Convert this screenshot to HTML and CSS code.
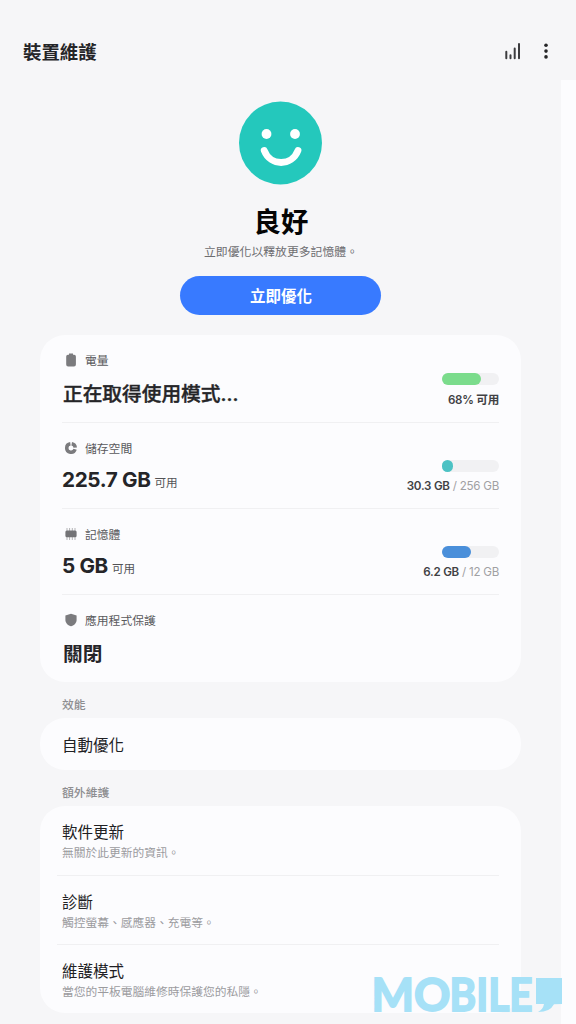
FILE: index.html
```html
<!DOCTYPE html>
<html lang="zh-Hant">
<head>
<meta charset="utf-8">
<title>裝置維護</title>
<link rel="stylesheet" href="styles.css">
</head>
<body>
<div class="edge"></div>
<header class="bar">
  <h1 class="title">裝置維護</h1>
  <div class="actions">
    <svg class="signal" width="18" height="20" viewBox="0 0 18 20" fill="none" stroke="#3c3c3f" stroke-width="2" stroke-linecap="round"><path d="M2.300 9.700V16.200M6.500 13.200V16.200M10.700 6.500V16.200M15 1.900V16.200"/></svg>
    <svg class="more" width="6" height="20" viewBox="0 0 6 20" fill="#252527"><circle cx="3" cy="3.3" r="1.8"/><circle cx="3" cy="9.1" r="1.8"/><circle cx="3" cy="14.9" r="1.8"/></svg>
  </div>
</header>
<main>
  <section class="hero">
    <svg class="face" width="84" height="84" viewBox="0 0 84 84"><circle cx="41.500" cy="42" r="41.5" fill="#24c8bc"/><circle cx="27.500" cy="33" r="4.9" fill="#fff"/><circle cx="56" cy="33" r="4.900" fill="#fff"/><path d="M25.200 49.500C31.500 65.500 52.700 65.500 59 49.500" fill="none" stroke="#fff" stroke-width="6.800" stroke-linecap="round"/></svg>
    <h2 class="status">良好</h2>
    <p class="hint">立即優化以釋放更多記憶體。</p>
    <button class="optimize">立即優化</button>
  </section>
  <section class="card stats">
    <div class="stat battery">
      <div class="info">
        <div class="label"><svg width="14" height="14" viewBox="0 0 14 14" fill="#7b7b7e"><path d="M5 .6h4v1.2h1.2a1.7 1.7 0 0 1 1.7 1.7v8.1a1.900 1.900 0 0 1-1.900 1.900H4.100a1.900 1.900 0 0 1-1.900-1.900V3.500a1.700 1.700 0 0 1 1.700-1.700H5z"/></svg><span>電量</span></div>
        <div class="value cjk">正在取得使用模式...</div>
      </div>
      <div class="usage"><div class="track"><i class="fill green" style="width:68%"></i></div><div class="amount"><b>68% 可用</b></div></div>
    </div>
    <div class="stat storage">
      <div class="info">
        <div class="label"><svg width="14" height="14" viewBox="0 0 14 14" fill="none" stroke="#7b7b7e" stroke-width="3.500"><path d="M6.400 2.700A4.300 4.300 0 1 0 11.100 8.300M7.700 2.750A4.300 4.300 0 0 1 11.250 6.700"/></svg><span>儲存空間</span></div>
        <div class="value">225.7 GB<small>可用</small></div>
      </div>
      <div class="usage"><div class="track"><i class="fill teal" style="width:20%"></i></div><div class="amount"><b>30.3 GB</b> / 256 GB</div></div>
    </div>
    <div class="stat memory">
      <div class="info">
        <div class="label"><svg width="14" height="14" viewBox="0 0 14 14"><path d="M3 1v12M5.600 1v12M8.300 1v12M11 1v12" stroke="#b3b3b6" stroke-width="1"/><rect x="1.400" y="3.500" width="11.200" height="6.800" rx="1.500" fill="#737376"/></svg><span>記憶體</span></div>
        <div class="value">5 GB<small>可用</small></div>
      </div>
      <div class="usage"><div class="track"><i class="fill blue" style="width:51%"></i></div><div class="amount"><b>6.2 GB</b> / 12 GB</div></div>
    </div>
    <div class="stat protection">
      <div class="info">
        <div class="label"><svg width="14" height="14" viewBox="0 0 14 14" fill="#7b7b7e"><path d="M7 .7 12.600 2.400V7C12.600 10.500 9.500 12.600 7 13.300 4.500 12.600 1.400 10.500 1.400 7V2.400z"/></svg><span>應用程式保護</span></div>
        <div class="value cjk">關閉</div>
      </div>
    </div>
  </section>
  <h3 class="heading">效能</h3>
  <section class="card auto"><div class="name">自動優化</div></section>
  <h3 class="heading second">額外維護</h3>
  <section class="card extra">
    <div class="item"><div class="name">軟件更新</div><p class="desc">無關於此更新的資訊。</p></div>
    <div class="item"><div class="name">診斷</div><p class="desc">觸控螢幕、感應器、充電等。</p></div>
    <div class="item"><div class="name">維護模式</div><p class="desc">當您的平板電腦維修時保護您的私隱。</p></div>
  </section>
</main>
<svg class="watermark" width="196" height="69" viewBox="0 -20 196 69" fill="#a6e1f7"><text y="36"><tspan x="-.5" textLength="79" lengthAdjust="spacingAndGlyphs">MO</tspan><tspan x="77.500" textLength="83" lengthAdjust="spacingAndGlyphs">BILE</tspan></text><path d="M164 3h26v26l-8 .2Q178 37 166 37q5-2.500 6-8h-8z"/></svg>
</body>
</html>
```
FILE: styles.css
```css
* { box-sizing: border-box; }
body {
  margin: 0; width: 576px; height: 1024px; overflow: hidden; position: relative;
  background: #f6f6f8; color: #252528;
  font-family: Inter, "Noto Sans CJK TC", sans-serif;
}
h1, h2, h3, p { margin: 0; }
.edge { position: absolute; right: 0; top: 80px; bottom: 0; width: 15px; background: #fcfcfe; }
.bar { height: 101px; padding: 0 27px 0 23px; display: flex; justify-content: space-between; }
.title { font-size: 18.4px; line-height: 26px; font-weight: 700; padding-top: 39px; }
.actions { display: flex; gap: 21px; padding-top: 42px; }
main { width: 481px; margin-left: 40px; }
.hero { height: 234px; display: flex; flex-direction: column; align-items: center; }
.face { flex: none; }
.status { font-size: 27.4px; line-height: 40px; margin-top: 17px; font-weight: 700; color: #050505; margin-left: 1px; }
.hint { font-size: 11.85px; line-height: 18px; margin-top: 1px; color: #6d6d70; margin-left: 1px; }
.optimize {
  width: 201px; height: 39px; margin-top: 15px; padding: 0 0 0 1px; border: 0; border-radius: 20px;
  background: #387aff; color: #fff; font: 700 15.5px/41px Inter, "Noto Sans CJK TC", sans-serif;
}
.card { background: #fcfcfe; border-radius: 25px; padding: 0 22px; }
.stats { height: 347px; }
.stat { height: 86px; display: flex; justify-content: space-between; border-bottom: 1px solid #f0f0f2; }
.battery { height: 88px; }
.protection { border: 0; }
.info { padding-top: 15px; }
.label { display: flex; align-items: center; gap: 7px; height: 20px; padding-left: 2px; font-size: 11.8px; line-height: 20px; color: #59595c; }
.label svg { flex: none; margin-top: -1px; }
.label span { padding-top: 1px; }
.value { font-size: 20.7px; line-height: 30px; margin: 7px 0 0; font-weight: 700; letter-spacing: -.36px; white-space: nowrap; }
.cjk { font-size: 19.7px; letter-spacing: 0; }
.battery .value { margin: 9px 0 0 1px; font-weight: 500; -webkit-text-stroke: .4px #252528; }
.protection .value { margin: 9px 0 0 1px; }
.value small { font-size: 11.6px; font-weight: 400; margin-left: 4px; letter-spacing: 0; color: #535356; }
.usage { display: flex; flex-direction: column; align-items: flex-end; padding-top: 37px; }
.battery .usage { padding-top: 38px; }
.track { width: 57px; height: 12px; border-radius: 6px; background: #f1f1f3; }
.fill { display: block; height: 100%; border-radius: 6px; }
.green { background: #7bdc8c; }
.teal { background: #4cc2c4; }
.blue { background: #4a8fda; }
.amount { font-size: 11.6px; line-height: 18px; margin-top: 5px; color: #a0a0a3; white-space: nowrap; letter-spacing: -.25px; }
.battery .amount { margin-top: 6px; }
.amount b { color: #414144; font-weight: 600; }
.heading { height: 36px; padding: 13px 22px 0; font-size: 11.85px; line-height: 20px; font-weight: 500; color: #8d8d90; }
.auto { height: 52px; padding-top: 16px; }
.name { font-size: 15.5px; line-height: 24px; font-weight: 400; color: #202023; }
.extra { height: 207px; padding: 0 22px 0 17px; }
.item { height: 69px; padding: 15px 0 0 5px; border-bottom: 1px solid #f0f0f2; }
.item:first-child { height: 70px; }
.item:last-child { border: 0; }
.desc { font-size: 11.75px; line-height: 16px; color: #9b9b9e; }
.watermark { position: absolute; left: 372px; top: 955px; }
.watermark text { font-family: Lato, sans-serif; font-size: 45px; font-weight: 700; stroke: #a6e1f7; stroke-width: 1.8px; }
```
